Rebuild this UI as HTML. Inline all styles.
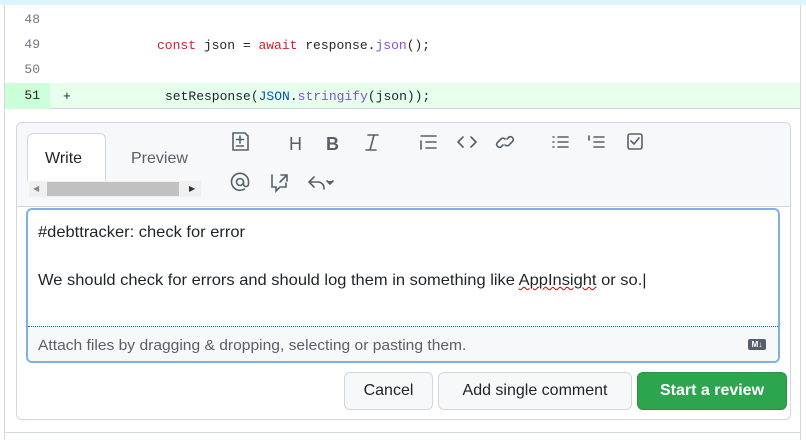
<!DOCTYPE html>
<html><head><meta charset="utf-8"><style>
*{box-sizing:border-box;margin:0;padding:0}
body{width:806px;height:440px;background:#fff;font-family:"Liberation Sans",sans-serif;position:relative;overflow:hidden;color:#1f2328}
.top{position:absolute;left:0;top:0;width:806px;height:5px;background:#ddf4ff}
.lb{position:absolute;left:4px;top:5px;width:1px;height:435px;background:#d0d7de}
.rb{position:absolute;left:800px;top:5px;width:1px;height:435px;background:#d0d7de}
.row{position:absolute;left:5px;width:795px;font-family:"Liberation Mono",monospace;font-size:13px}
.num{position:absolute;left:0;width:45px;text-align:right;padding-right:10px;color:#6e7781}
.code{position:absolute;white-space:pre}
.k{color:#cf222e}.f{color:#8250df}.c{color:#0550ae}
.box{position:absolute;left:16px;top:122px;width:775px;height:298px;border:1px solid #d0d7de;border-radius:6px;background:#fff}
.hdr{position:absolute;left:0;top:0;width:773px;height:84px;background:#f6f8fa;border-bottom:1px solid #d0d7de;border-radius:6px 6px 0 0}
.tab{position:absolute;font-size:16px;color:#1f2328}
.ta{position:absolute;left:26px;top:208px;width:754px;height:155px;border:2px solid #7eb0ea;border-radius:6px;background:#fff;overflow:hidden}
.txt{position:absolute;left:10px;font-size:16px;color:#1f2328;white-space:nowrap;transform-origin:0 0;transform:scaleX(1.03)}
.foot{position:absolute;left:0;top:116px;width:750px;height:37px;background:#f6f8fa;border-top:1px dotted #0969da}
.btn{position:absolute;top:372px;height:38px;border:1px solid #d0d7de;border-radius:6px;background:#f6f8fa;font-size:16px;text-align:center;line-height:36px;color:#1f2328}
</style></head><body>
<div class="top"></div><div class="lb"></div><div class="rb"></div>
<div class="row" style="top:10px;height:22px"><span class="num" style="top:2px">48</span></div>
<div class="row" style="top:35px;height:22px"><span class="num" style="top:2px">49</span><span class="code" style="left:152px;top:3px"><span class="k">const</span> json = <span class="k">await</span> response.<span class="f">json</span>();</span></div>
<div class="row" style="top:60px;height:22px"><span class="num" style="top:2px">50</span></div>
<div class="row" style="top:83px;height:26px;background:#e6ffec;border-bottom:1px solid #d0d7de"><span class="num" style="height:26px;background:#ccffd8;top:0;line-height:25px;color:#1f2328">51</span><span class="code" style="left:58px;top:6px">+</span><span class="code" style="left:160px;top:6px">setResponse(<span class="c">JSON</span>.<span class="f">stringify</span>(json));</span></div>
<div class="box"><div class="hdr">
<div style="position:absolute;left:10px;top:10px;width:79px;height:48px;background:#fff;border:1px solid #d0d7de;border-bottom:none;border-radius:6px 6px 0 0"></div>
<div class="tab" style="left:28px;top:27px">Write</div>
<div class="tab" style="left:114px;top:27px;color:#57606a">Preview</div>
<div style="position:absolute;left:12px;top:58px;width:172px;height:16px;background:#f0f0f0"></div>
<div style="position:absolute;left:30px;top:59px;width:132px;height:14px;background:#c1c1c1"></div>
<div style="position:absolute;left:16px;top:61px;font-size:8px;color:#888">◀</div>
<div style="position:absolute;left:172px;top:61px;font-size:8px;color:#333">▶</div>
<svg style="position:absolute;left:0;top:0" width="660" height="84" fill="none" stroke="#57606a" stroke-width="1.6" stroke-linecap="round">
<path d="M216 10h12l3 3v14h-15z"/><path d="M223 13v7M219.5 16.5h7M219.5 23h7"/>
<text x="272" y="27" font-family="Liberation Sans" font-size="18" fill="#57606a" stroke="none">H</text>
<text x="309" y="27" font-family="Liberation Sans" font-size="18" font-weight="bold" fill="#57606a" stroke="none">B</text>
<path d="M351 12h10M349 27h10M357 12l-4 15"/>
<path d="M404 13h15M404 18v8M409 19h10M409 25h10"/>
<path d="M446 14l-5 5 5 5M454 14l5 5-5 5"/>
<path d="M486 22l-2 2a3 3 0 0 1-4-4l4-4a3 3 0 0 1 4 0M490 16l2-2a3 3 0 0 1 4 4l-4 4a3 3 0 0 1-4 0"/>
<path d="M536 14h1M536 19h1M536 24h1M541 14h10M541 19h10M541 24h10"/>
<path d="M577 19h10M577 24h10M577 14h10M572 13v4"/>
<rect x="611" y="11" width="14" height="15" rx="2"/><path d="M614 18l3 3 5-6"/>
<circle cx="223" cy="59" r="3.5"/><path d="M226.5 59v2a2.5 2.5 0 0 0 5 0v-2a8.5 8.5 0 1 0-4 7"/>
<path d="M255 52v12h4v4l4-4h6v-4M264 52h6v6M270 52l-7 7"/>
<path d="M297 54l-5 5 5 5M292 59h9a6 6 0 0 1 6 6v1"/>
<path d="M310 58l3 3 3-3" fill="#57606a"/>
</svg>
</div></div>
<div class="ta">
<div class="txt" style="top:14px">#debttracker: check for error</div>
<div class="txt" style="top:62px">We should check for errors and should log them in something like <span style="text-decoration:underline wavy #d00;text-decoration-thickness:1px">AppInsight</span> or so.|</div>
<div class="foot"><div class="txt" style="top:10px;font-size:15px;color:#57606a;transform:scaleX(1.04)">Attach files by dragging &amp; dropping, selecting or pasting them.</div>
<div style="position:absolute;left:720px;top:12px;width:18px;height:11px;background:#57606a;border-radius:2px;color:#fff;font-size:8px;font-weight:bold;text-align:center;line-height:11px">M↓</div></div>
</div>
<div class="btn" style="left:344px;width:89px">Cancel</div>
<div class="btn" style="left:438px;width:194px">Add single comment</div>
<div class="btn" style="left:637px;width:150px;background:#2da44e;border-color:#2a9147;color:#fff;font-weight:bold">Start a review</div>
<div style="position:absolute;left:5px;top:432px;width:795px;height:1px;background:#d0d7de"></div>
</body></html>
